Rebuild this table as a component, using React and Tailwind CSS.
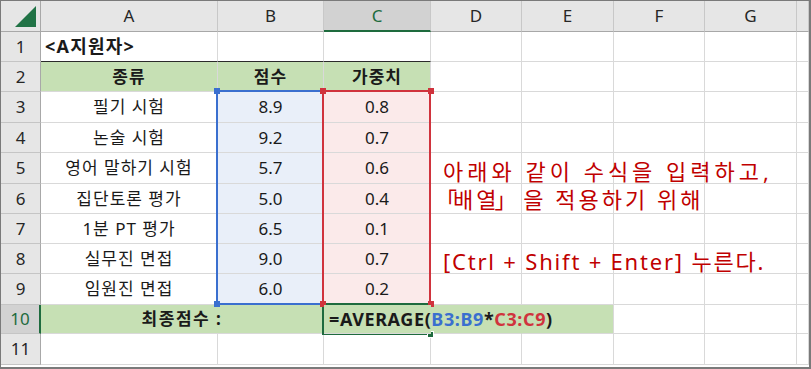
import React from 'react';

const FONT = { fontFamily: "'Noto Sans', 'Noto Sans CJK KR', sans-serif" };
const COLS = ['A', 'B', 'C', 'D', 'E', 'F', 'G', ''];

const items = [
  ['필기 시험', '8.9', '0.8'],
  ['논술 시험', '9.2', '0.7'],
  ['영어 말하기 시험', '5.7', '0.6'],
  ['집단토론 평가', '5.0', '0.4'],
  ['1분 PT 평가', '6.5', '0.1'],
  ['실무진 면접', '9.0', '0.7'],
  ['임원진 면접', '6.0', '0.2'],
];

function RowHead({ n, active }) {
  return (
    <div className={`flex items-center justify-center border-b border-r text-[17px] ${active ? 'bg-[#d2d2d2] text-[#1e6b3e] border-b-[#c5c5c5] border-r-2 border-r-[#1e6b3e]' : 'bg-[#e6e6e6] text-[#262626] border-[#c5c5c5] border-r-[#a8a8a8]'}`}>
      {n}
    </div>
  );
}

function Cell({ children, className = '' }) {
  return (
    <div className={`flex items-center border-r border-b border-[#d9d9d9] text-[17px] text-[#1a1a1a] ${className}`}>
      {children}
    </div>
  );
}

function Blank({ count }) {
  return Array.from({ length: count }).map((_, i) => <Cell key={i} />);
}

export default function App() {
  return (
    <div className="w-[811px] h-[369px] bg-white border-t border-l border-r-2 border-b-2 border-[#7a7a7a] overflow-hidden" style={FONT}>
      <div className="relative">
        <div className="grid grid-cols-[40px_177px_106px_107px_91px_92px_91px_92px_12px] grid-rows-[31px_30px_30px_31px_30px_31px_30px_30px_30px_31px_29px_31px]">
          {/* header row */}
          <div className="relative bg-[#e6e6e6] border-r border-b border-[#a8a8a8]">
            <svg className="absolute left-[14px] top-[5px]" width="22" height="22" viewBox="0 0 22 22">
              <polygon points="0,21 21,21 21,0" fill="#217346" />
            </svg>
          </div>
          {COLS.map((c) => (
            <div
              key={c || 'h'}
              className={`flex items-center justify-center text-[17px] border-r border-r-[#c8c8c8] ${c === 'C' ? 'bg-[#d2d2d2] text-[#1e6b3e] border-b-2 border-b-[#1e6b3e]' : 'bg-[#e6e6e6] text-[#262626] border-b border-b-[#a8a8a8]'}`}
            >
              {c}
            </div>
          ))}

          {/* row 1 */}
          <RowHead n={1} />
          <Cell className="pl-[4px] font-bold text-[18px] tracking-[1.2px] border-b-[#2b2b2b]">&lt;A지원자&gt;</Cell>
          <Cell className="border-b-[#2b2b2b]" />
          <Cell className="border-b-[#2b2b2b]" />
          <Blank count={5} />

          {/* row 2 */}
          <RowHead n={2} />
          <Cell className="justify-center font-bold tracking-[1px] bg-[#c6e0b4] border-[#2b2b2b]">종류</Cell>
          <Cell className="justify-center font-bold tracking-[1px] bg-[#c6e0b4] border-[#2b2b2b]">점수</Cell>
          <Cell className="justify-center font-bold tracking-[1px] bg-[#c6e0b4] border-[#2b2b2b]">가중치</Cell>
          <Blank count={5} />

          {/* rows 3-9 */}
          {items.map(([name, score, weight], i) => (
            <React.Fragment key={name}>
              <RowHead n={i + 3} />
              <Cell className="justify-center tracking-[1px] border-[#3f3f3f]">{name}</Cell>
              <Cell className="justify-center bg-[#e9eff9] border-[#3f3f3f]">{score}</Cell>
              <Cell className="justify-center bg-[#fbeaea] border-[#3f3f3f]">{weight}</Cell>
              <Blank count={5} />
            </React.Fragment>
          ))}

          {/* row 10 */}
          <RowHead n={10} active />
          <Cell className="col-span-2 justify-center font-bold tracking-[1.5px] bg-[#c6e0b4] border-[#2b2b2b]">최종점수 :</Cell>
          <Cell className="bg-[#c6e0b4] border-r-[#c6e0b4] pl-[5px] font-bold text-[18px] tracking-[0.6px] whitespace-nowrap overflow-visible z-10">
            <span>
              =AVERAGE(<span className="text-[#3a6fcf]">B3:B9</span>*<span className="text-[#d0333d]">C3:C9</span>)
            </span>
          </Cell>
          <Cell className="bg-[#c6e0b4] border-r-[#c6e0b4]" />
          <Cell className="bg-[#c6e0b4]" />
          <Blank count={3} />

          {/* row 11 */}
          <RowHead n={11} />
          <Blank count={8} />
        </div>

        {/* reference range highlights */}
        <div className="absolute left-[215px] top-[89px] w-[108px] h-[215px] border-2 border-[#3a6fcf]" />
        <div className="absolute left-[321px] top-[89px] w-[109px] h-[215px] border-2 border-[#d0333d]" />
        <div className="absolute left-[321px] top-[302px] w-[109px] h-[32px] border-2 border-[#1e6b3e]" />
        <div className="absolute left-[213px] top-[87px] w-[6px] h-[6px] bg-[#3a6fcf]" />
        <div className="absolute left-[213px] top-[300px] w-[6px] h-[6px] bg-[#3a6fcf]" />
        <div className="absolute left-[319px] top-[87px] w-[6px] h-[6px] bg-[#d0333d]" />
        <div className="absolute left-[427px] top-[87px] w-[6px] h-[6px] bg-[#d0333d]" />
        <div className="absolute left-[319px] top-[300px] w-[6px] h-[6px] bg-[#d0333d]" />
        <div className="absolute left-[427px] top-[300px] w-[6px] h-[6px] bg-[#d0333d]" />
        <div className="absolute left-[426px] top-[330px] w-[7px] h-[7px] bg-[#1e6b3e] border border-white" />

        {/* text box */}
        <div className="absolute left-[442px] top-[156px] text-[22px] leading-[28px] text-[#c00000] whitespace-nowrap">
          <div className="tracking-[4px]">아래와 같이 수식을 입력하고,</div>
          <div className="tracking-[3px] -ml-[8px]">
            <span className="tracking-[-4px]">「</span>배<span className="tracking-[-2px]">열</span><span className="tracking-[-2px]">」</span> 을 적용하기 위해
          </div>
          <div className="mt-[34px] tracking-[1.8px]">[Ctrl + Shift + Enter] 누른다.</div>
        </div>
      </div>
    </div>
  );
}
